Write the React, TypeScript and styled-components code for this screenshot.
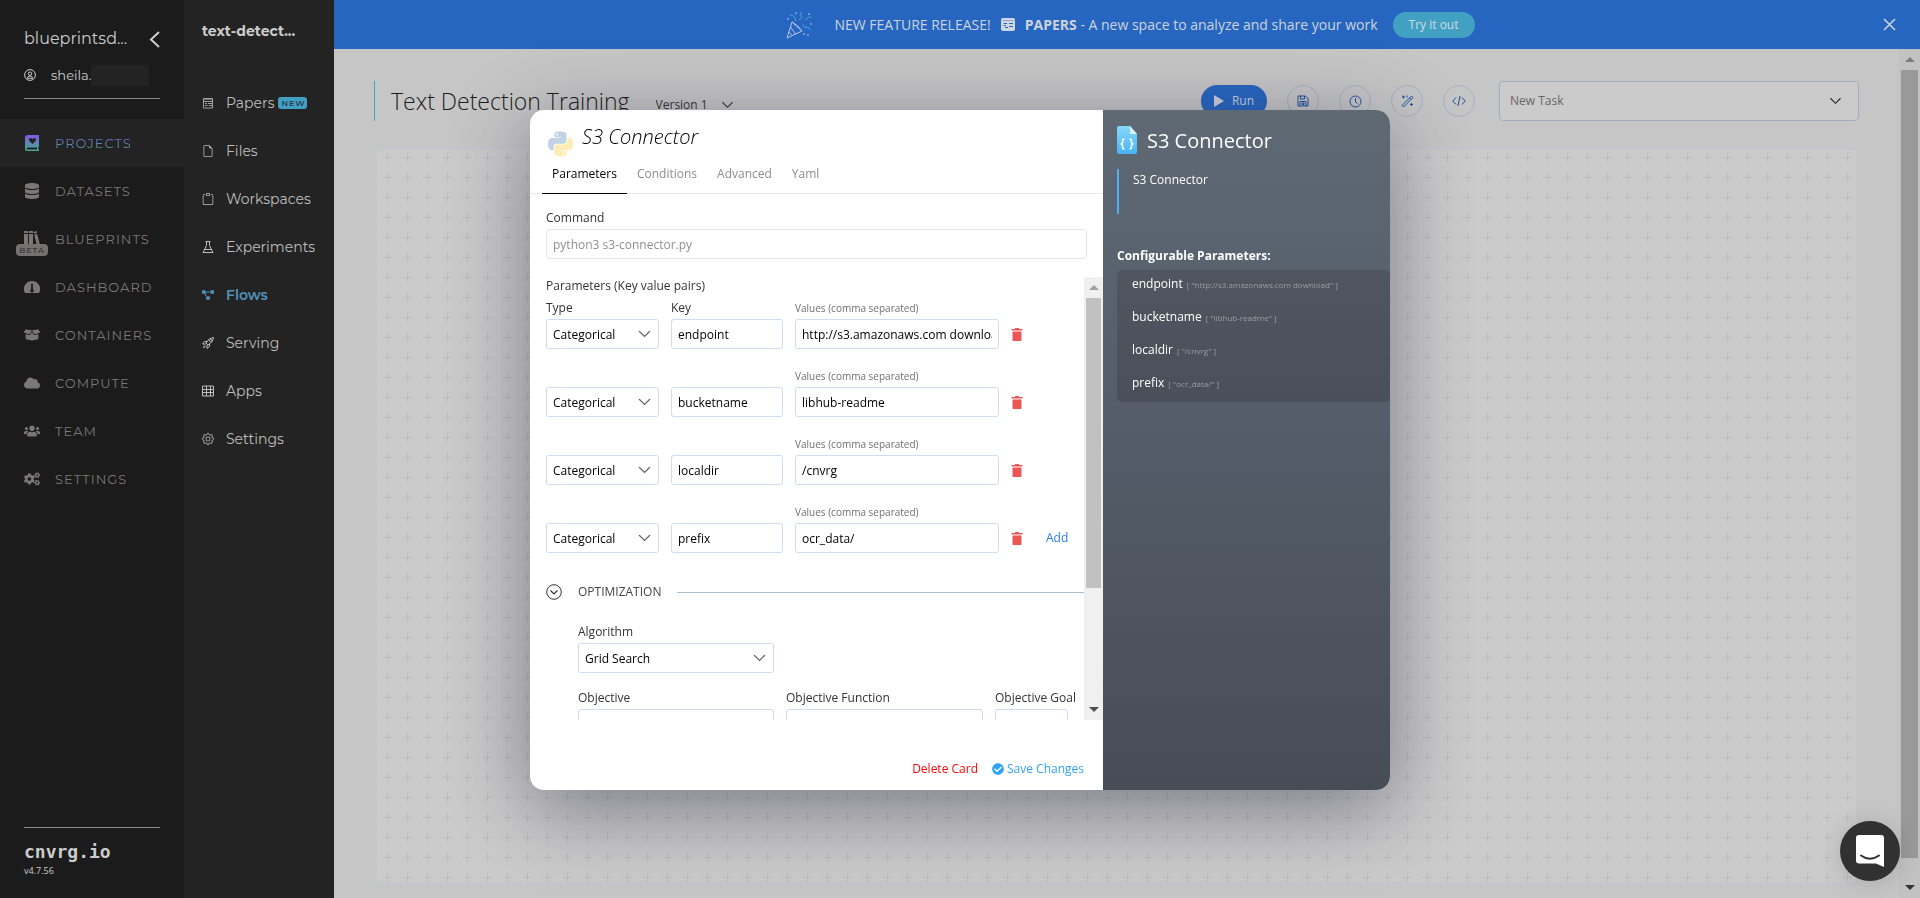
import React, { useId, useState } from 'react';
import styled, { createGlobalStyle, css } from 'styled-components';
import { FaDatabase, FaBoxOpen, FaCloud, FaUsers, FaCogs, FaProjectDiagram, FaCheckCircle } from 'react-icons/fa';
import { BsFileEarmark, BsClipboard, BsGear } from 'react-icons/bs';

const text = "'Open Sans', 'Noto Sans', sans-serif";
const nav = "Montserrat, Inter, sans-serif";

const Global = createGlobalStyle`
  *, *::before, *::after { box-sizing: border-box; }
  body { margin: 0; overflow: hidden; background: #c6c6c6; font: 12px/18px ${text}; color: #333; }
  button, input, select { font: inherit; color: inherit; margin: 0; }
  button { padding: 0; border: 0; background: none; cursor: pointer; }
  a { color: inherit; text-decoration: none; }
  svg { display: block; flex: none; }
`;

/* ---------- shell ---------- */
const Shell = styled.div`
  display: grid;
  grid-template-columns: 184px 150px minmax(0, 1fr);
  height: 100vh;
`;

const Sidebar = styled.aside`
  display: flex;
  flex-direction: column;
  background: #1b1b1b;
  font-family: ${nav};
  color: #cccccc;
`;

const Account = styled.header`
  margin: 0 24px 20px;
  padding-top: 27px;
  border-bottom: 1px solid #868986;
`;

const OrgRow = styled.div`
  display: flex;
  align-items: center;
  justify-content: space-between;
  height: 24px;
  font-size: 16px;
`;

const UserRow = styled.div`
  display: flex;
  align-items: center;
  margin: 13px 0 12px;
  height: 22px;
  font-size: 13px;
  span { margin-left: 15px; }
`;

const Redacted = styled.i`
  flex: 1;
  height: 21px;
  margin-right: 11px;
  background: #232323;
`;

const NavItem = styled.a<{ $active?: boolean }>`
  position: relative;
  display: flex;
  align-items: center;
  gap: 15px;
  height: 48px;
  padding-left: 24px;
  font-size: 13px;
  letter-spacing: 1px;
  color: #7b7777;
  background: ${p => (p.$active ? '#232323' : 'transparent')};
  span {
    ${p => p.$active && css`
      color: transparent;
      background: linear-gradient(#7a5fd6, #4aa392);
      background-clip: text;
      -webkit-background-clip: text;
    `}
  }
`;

const Beta = styled.b`
  position: absolute;
  left: 16px;
  top: 29px;
  width: 32px;
  height: 12px;
  border-radius: 4px;
  background: #757171;
  color: #333;
  font: 500 8px/12px ${nav};
  letter-spacing: 1px;
  text-align: center;
`;

const Brand = styled.footer`
  margin: auto 24px 20px;
  padding-top: 12px;
  border-top: 1px solid #868986;
  strong { display: block; font: bold 18px/24px 'DejaVu Sans Mono', monospace; }
  small { display: block; font: 9px/14px ${text}; }
`;

const SubNav = styled.nav`
  background: #232323;
  font-family: ${nav};
  color: #bdbdbd;
  h2 { margin: 21px 18px 43px; font-size: 14px; line-height: 20px; color: #cccccc; }
`;

const SubItem = styled.a<{ $active?: boolean }>`
  display: flex;
  align-items: center;
  gap: 12px;
  height: 48px;
  padding: 0 0 10px 18px;
  font-size: 14px;
  ${p => p.$active && 'color: #5292b8; font-weight: 600;'}
`;

const NewTag = styled.b`
  margin-left: -8px;
  padding: 0 2px 0 3px;
  border-radius: 3px;
  background: #429fc2;
  color: #23404c;
  font: 600 8px/12px ${nav};
  letter-spacing: 1px;
`;

const Main = styled.main`
  display: grid;
  grid-template-rows: 49px minmax(0, 1fr);
`;

/* ---------- banner ---------- */
const Banner = styled.div`
  display: flex;
  align-items: center;
  background: #2666c0;
  color: #cdd3dc;
  font-size: 14px;
  padding: 0 24px;
`;

const BannerCopy = styled.div`
  flex: 1;
  display: flex;
  align-items: center;
  justify-content: center;
  padding-left: 20px;
  gap: 10px;
  p { margin: 0; }
  > svg:first-child { margin-right: 11px; }
`;

const TryButton = styled.button`
  margin-left: 5px;
  width: 82px;
  height: 26px;
  border-radius: 13px;
  background: #42a1c2;
  font-size: 12px;
  color: #d0dde2;
`;

/* ---------- workspace ---------- */
const Workspace = styled.div`
  display: flex;
  min-height: 0;
`;

const Content = styled.section`
  flex: 1;
  display: flex;
  flex-direction: column;
  padding: 32px 40px 13px;
`;

const Toolbar = styled.header`
  display: flex;
  align-items: center;
  height: 40px;
  margin-bottom: 26px;
`;

const Title = styled.h1`
  margin: 0;
  padding-left: 16px;
  border-left: 1px solid #3fa7c6;
  font-size: 23px;
  line-height: 40px;
  font-weight: 300;
  color: #1c1c1c;
`;

const Actions = styled.div`
  display: flex;
  align-items: center;
  gap: 20px;
  margin-left: auto;
`;

const RunButton = styled.button`
  display: flex;
  align-items: center;
  justify-content: center;
  gap: 8px;
  width: 66px;
  height: 32px;
  border-radius: 16px;
  background: #2666c0;
  color: #ccd2dc;
  font-size: 12px;
`;

const RoundButton = styled.button`
  display: grid;
  place-items: center;
  width: 32px;
  height: 32px;
  border: 1px solid #a3b1c9;
  border-radius: 50%;
  color: #1d4f9c;
`;

const PickerBox = styled.div<{ $variant: 'plain' | 'task' | 'field' }>`
  position: relative;
  select {
    width: 100%;
    appearance: none;
    outline: 0;
    border: 1px solid;
  }
  > svg { position: absolute; pointer-events: none; top: 50%; transform: translateY(-50%); }
  ${p => p.$variant === 'plain' && css`
    margin: 8px 0 0 26px;
    width: 80px;
    color: #333;
    select { border: 0; background: none; padding: 0; height: 18px; }
    > svg { right: 3px; }
  `}
  ${p => p.$variant === 'task' && css`
    margin-left: 4px;
    width: 360px;
    color: #666;
    select { height: 40px; border-color: #a0acc4; border-radius: 4px; background: #cbcbcb; padding: 0 10px; }
    > svg { right: 18px; color: #222; }
  `}
  ${p => p.$variant === 'field' && css`
    color: #000;
    select { height: 30px; border-color: #cfddf3; border-radius: 3px; background: #fff; padding: 1px 6px 0; }
    > svg { right: 8px; color: #666; }
  `}
`;

const Canvas = styled.div`
  flex: 1;
  border: 3px solid #c3c7cd;
  border-radius: 6px;
  background: #cbcbcb 0 -3px
    url("data:image/svg+xml,%3Csvg xmlns='http://www.w3.org/2000/svg' width='20' height='20'%3E%3Cpath d='M6 10.500h9M10.500 6v9' stroke='%23bcbcbc'/%3E%3C/svg%3E");
`;

/* ---------- scrollbars ---------- */
const Track = styled.div<{ $w: number; $dim?: boolean }>`
  flex: none;
  display: flex;
  flex-direction: column;
  align-items: center;
  width: ${p => p.$w}px;
  background: ${p => (p.$dim ? '#c2c2c2' : '#f0f0f0')};
  > svg { margin: 8px 0; }
`;

const Thumb = styled.div<{ $share: number; $dim?: boolean }>`
  flex: ${p => p.$share};
  width: calc(100% - 4px);
  background: ${p => (p.$dim ? '#999' : '#c1c1c1')};
`;

const TrackRest = styled.div<{ $share: number }>`
  flex: ${p => p.$share};
`;

/* ---------- dialog ---------- */
const Overlay = styled.div`
  position: fixed;
  inset: 0;
  display: grid;
  place-items: center;
  padding-top: 2px;
`;

const Dialog = styled.section`
  display: grid;
  grid-template-columns: 573px 287px;
  height: 680px;
  border-radius: 14px;
  overflow: hidden;
  background: #fff;
  box-shadow: 0 18px 80px rgba(32, 32, 58, 0.48);
`;

const Editor = styled.form`
  display: flex;
  flex-direction: column;
  min-height: 0;
`;

const EditorHead = styled.header`
  display: flex;
  align-items: flex-start;
  gap: 9px;
  padding: 15px 18px 0;
  svg { margin-top: 6px; }
  h2 { margin: 0; font-size: 20px; line-height: 24px; font-weight: 300; font-style: italic; color: #000; }
`;

const Tabs = styled.div`
  display: flex;
  padding-left: 12px;
  box-shadow: inset 0 -1px #e9e9e9;
`;

const Tab = styled.button<{ $active: boolean }>`
  padding: 8px 10px 10px;
  border-bottom: 1px solid ${p => (p.$active ? '#000' : 'transparent')};
  color: ${p => (p.$active ? '#000' : '#8c8c8c')};
`;

const Field = styled.div`
  display: flex;
  flex-direction: column;
  justify-content: flex-end;
  gap: 2px;
  min-width: 0;
  label { white-space: nowrap; }
`;

const SmallLabel = styled.label`
  font-size: 10px;
  color: #707070;
`;

const TextInput = styled.input`
  width: 100%;
  height: 30px;
  padding: 0 6px;
  border: 1px solid #cfddf3;
  border-radius: 3px;
  outline: 0;
  background: #fff;
  color: #000;
  &:disabled { border-color: #e5e5e5; color: #8f8f8f; }
`;

const CommandBlock = styled.div`
  padding: 15px 16px 18px;
`;

const ScrollArea = styled.div`
  flex: 1;
  display: flex;
  min-height: 0;
  overflow: hidden;
`;

const ScrollBody = styled.div`
  flex: 1;
  min-width: 0;
  padding-left: 16px;
  overflow: hidden;
`;

const ParamList = styled.fieldset`
  display: grid;
  gap: 18px;
  margin: 0;
  padding: 0;
  border: 0;
  legend { padding: 0; margin-bottom: 4px; }
`;

const ParamRow = styled.div`
  display: grid;
  grid-template-columns: 113px 112px 204px 12px auto;
  column-gap: 12px;
  justify-content: start;
`;

const IconButton = styled.button`
  align-self: end;
  height: 30px;
`;

const AddButton = styled.button`
  align-self: end;
  height: 30px;
  margin-left: 11px;
  color: #2a80ee;
`;

const SectionToggle = styled.button`
  display: flex;
  align-items: center;
  gap: 16px;
  width: 100%;
  height: 18px;
  margin-top: 30px;
  color: #444;
  &::after { content: ''; flex: 1; height: 1px; background: #aebfd2; }
`;

const OptimGrid = styled.div`
  display: grid;
  grid-template-columns: 196px 197px 73px;
  gap: 16px 12px;
  padding: 22px 0 0 32px;
`;

const FirstLine = styled.div`
  grid-column: 1 / -1;
  width: 196px;
`;

const EditorFoot = styled.footer`
  display: flex;
  justify-content: flex-end;
  gap: 14px;
  height: 70px;
  padding: 40px 19px 12px 0;
`;

const FootButton = styled.button<{ $tone: string }>`
  display: flex;
  align-items: center;
  gap: 3px;
  height: 18px;
  color: ${p => p.$tone};
`;

const Info = styled.aside`
  padding: 16px 0 0 14px;
  background: linear-gradient(#5e6974, #545d69 45%, #474d57);
  color: #fff;
`;

const InfoHead = styled.header`
  display: flex;
  align-items: center;
  gap: 10px;
  height: 28px;
  h2 { margin: 0; padding-top: 2px; font-size: 20px; line-height: 28px; font-weight: 400; }
`;

const Summary = styled.p`
  margin: 15px 0 33px;
  height: 45px;
  padding: 2px 0 0 14px;
  border-left: 2px solid #4db2f5;
`;

const InfoTitle = styled.h3`
  margin: 0 0 5px;
  font-size: 12px;
  line-height: 18px;
`;

const ParamSummary = styled.ul`
  margin: 0;
  padding: 0 0 0 15px;
  list-style: none;
  border-radius: 5px;
  background: linear-gradient(#50565f, #4a5059);
  li { height: 33px; padding-top: 5px; }
  small { margin-left: 4px; font-size: 8px; color: #9a9da3; }
`;

const ChatButton = styled.button`
  position: fixed;
  right: 20px;
  bottom: 17px;
  display: grid;
  place-items: center;
  width: 60px;
  height: 60px;
  border-radius: 50%;
  background: #313131;
  box-shadow: 0 2px 24px rgba(0, 0, 0, 0.15);
`;

/* ---------- drawings ---------- */
const Chevron = ({ w = 12 }: { w?: number }) => (
  <svg width={w} height="7" viewBox="0 0 12 7" fill="none" stroke="currentColor" strokeWidth="1.200"><path d="M.5.5 6 6 11.500.5" /></svg>
);

const Arrow = ({ down, color }: { down?: boolean; color: string }) => (
  <svg width="10" height="5" viewBox="0 0 10 5" fill={color}><path d={down ? 'M0 0h10L5 5z' : 'M0 5h10L5 0z'} /></svg>
);

const Trash = () => (
  <svg width="12" height="13" viewBox="0 0 12 13" fill="#ec5555"><path d="M4 0h4v1h3.500v1.500H.5V1H4zM1.500 3.500h9V12q0 1-1 1h-7q-1 0-1-1z" /></svg>
);

const UserIcon = () => (
  <svg width="12" height="12" viewBox="0 0 12 12" fill="none" stroke="currentColor"><circle cx="6" cy="6" r="5.400" /><circle cx="6" cy="4.700" r="1.700" /><path d="M3.300 9.300q.4-2.300 2.700-2.300t2.700 2.300z" /></svg>
);

const ProjectIcon = () => (
  <svg width="16" height="16" viewBox="0 0 16 16">
    <defs><linearGradient id="proj" x2="0" y2="1"><stop stopColor="#8157e0" /><stop offset="1" stopColor="#42b08a" /></linearGradient></defs>
    <path fill="url(#proj)" fillRule="evenodd" d="M3.500 0H15v11.500l-.6.600v2l.6.600V16H3.500Q1 16 1 13.500v-11Q1 0 3.500 0zM3.800 12.500q-1.200.1-1.200 1t1.200 1H13v-2zM8.500 9l3.200-3.300q1-1.300-.1-2.300-1.300-1-2.500.1l-.6.600-.6-.6q-1.200-1.100-2.500-.1-1.100 1-.1 2.300z" />
  </svg>
);

const BooksIcon = () => (
  <svg width="16" height="16" viewBox="0 0 16 16" fill="currentColor"><path d="M0 0h4v2H0zM0 3h4v13H0zM5 0h4v2H5zM5 3h4v13H5zM9.500 1l3-.9.5 1.900-3 .8zM10.200 3.800l3-.8L16 14l-3 .9z" /></svg>
);

const GaugeIcon = () => (
  <svg width="16" height="16" viewBox="0 0 16 16" fill="currentColor"><path fillRule="evenodd" d="M8 2a8 8 0 0 0-7 12h14A8 8 0 0 0 8 2zm-.7 2.500h1.400l.3 6a1.700 1.700 0 1 1-2 0z" /></svg>
);

const PaperIcon = () => (
  <svg width="12" height="12" viewBox="0 0 12 12" fill="none" stroke="currentColor"><path opacity=".8" d="M1.500 1.500h9v9.500h-9z" /><path opacity=".5" d="M1 2.500h10" /><path opacity=".8" d="M1 4.500h10M3 6.500h2M6 6.500h4M3 8.500h2.500M7 8.500h3" /></svg>
);

const BannerPaper = () => (
  <svg width="14" height="13" viewBox="0 0 14 13"><rect width="14" height="13" rx="2" fill="#d0d7e2" /><path d="M2.500 5.500H6M8 5.500h4M2.500 7.500H5M8 8.500h4M4 9.500h3" stroke="#2666c0" /><path d="M1.500 2.500h11" stroke="#8aa9d8" /></svg>
);

const FlaskIcon = () => (
  <svg width="12" height="12" viewBox="0 0 12 12" fill="none" stroke="currentColor"><path d="M3.500.5h5M4.500.5v4L1 11.500h10L7.500 4.500v-4M3 8.500h6" /></svg>
);

const RocketIcon = () => (
  <svg width="12" height="12" viewBox="0 0 12 12" fill="none" stroke="currentColor"><path d="M11.500.5Q7 .5 4 6l2 2q5.500-3 5.500-7.500zM5 4.500H2.500L.5 7H4M7.500 7v2.500l-2.500 2V8M2.500 8.500l-1 2 2-1" /><circle cx="8.500" cy="3.500" r="1" /></svg>
);

const GridIcon = () => (
  <svg width="12" height="12" viewBox="0 0 12 12" fill="none" stroke="currentColor"><path d="M.5 1v10h11V1zM.5 4.500h11M.5 7.500h11M4.500 1v10M8.500 1v10" /></svg>
);

const Confetti = () => (
  <svg width="27" height="28" viewBox="0 0 27 28" fill="none" stroke="#b5c8e6">
    <path d="M6 11 1 27l15-7zM6 11q6 3 10 9M4.500 16l5 7M3 21l3 3.500" />
    <path stroke="#45a6cf" d="M4 4q5 0 6 6M13 9q4-2 2-4t1-4M17 13q0 4 3 3t4 3M20 9q0-3 5-3" />
    <path d="M10 1v2M23 2v2M25 12v2M22 23v2M2 7v2M18 22v2" />
  </svg>
);

const SaveIcon = () => (
  <svg width="12" height="12" viewBox="0 0 12 12" fill="none" stroke="currentColor"><path d="M1 1h7.500L11 3.500V11H1zM3.500 1v3h4V1M3 11V6.500h6V11M5 8h2v1.500H5z" /></svg>
);

const ClockIcon = () => (
  <svg width="13" height="13" viewBox="0 0 13 13" fill="none" stroke="currentColor"><circle cx="6.500" cy="6.500" r="5.500" /><path d="M6.500 3v4l2 1.500" /></svg>
);

const WandIcon = () => (
  <svg width="13" height="13" viewBox="0 0 13 13" fill="none" stroke="currentColor"><path d="M1 10.500 10.500 1 12 2.500 2.500 12zM8.500 3 10 4.500M2.500.5v3M1 2h3M6 .5v2M10.500 8v3M9 9.500h3" /></svg>
);

const CodeIcon = () => (
  <svg width="14" height="12" viewBox="0 0 14 12" fill="none" stroke="currentColor"><path d="M4 2.500.8 6 4 9.500M10 2.500 13.200 6 10 9.500M8 1 6 11" /></svg>
);

const PythonIcon = () => (
  <svg width="25" height="26" viewBox="0 0 24 24">
    <path fill="#c1d4e5" d="M14.250.18l.9.2.73.26.59.3.45.32.34.34.25.34.16.33.1.3.04.26.02.2-.01.13V8.500l-.05.63-.13.55-.21.46-.26.38-.3.31-.33.25-.35.19-.35.14-.33.1-.3.07-.26.04-.21.02H8.770l-.69.05-.59.14-.5.22-.41.27-.33.32-.27.35-.2.36-.15.37-.1.35-.07.32-.04.27-.02.21v3.060H3.170l-.21-.03-.28-.07-.32-.12-.35-.18-.36-.26-.36-.36-.35-.46-.32-.59-.28-.73-.21-.88-.14-1.050-.05-1.230.06-1.220.16-1.040.24-.87.32-.71.36-.57.4-.44.42-.33.42-.24.4-.16.36-.1.32-.05.24-.01h.16l.06.01h8.160v-.83H6.180l-.01-2.750-.02-.37.05-.34.11-.31.17-.28.25-.26.31-.23.38-.2.44-.18.51-.15.58-.12.64-.1.71-.06.77-.04.84-.02 1.270.05z" />
    <path fill="#ffedb5" d="M21.040 6.110l.28.06.32.12.35.18.36.27.36.35.35.47.32.59.28.73.21.88.14 1.040.05 1.230-.06 1.230-.16 1.040-.24.86-.32.71-.36.57-.4.45-.42.33-.42.24-.4.16-.36.09-.32.05-.24.02-.16-.01h-8.220v.82h5.840l.01 2.760.02.36-.05.34-.11.31-.17.29-.25.25-.31.24-.38.2-.44.17-.51.15-.58.13-.64.09-.71.07-.77.04-.84.01-1.270-.04-1.070-.14-.9-.2-.73-.25-.59-.3-.45-.33-.34-.34-.25-.34-.16-.33-.1-.3-.04-.25-.02-.2.01-.13v-5.340l.05-.64.13-.54.21-.46.26-.38.3-.32.33-.24.35-.2.35-.14.33-.1.3-.06.26-.04.21-.02.13-.01h5.840l.69-.05.59-.14.5-.21.41-.28.33-.32.27-.35.2-.36.15-.36.1-.35.07-.32.04-.28.02-.21V6.070h2.090z" />
    <circle cx="8.700" cy="2.900" r="1" fill="#fff" /><circle cx="15.300" cy="21.100" r="1" fill="#fff" />
  </svg>
);

const JsonFileIcon = () => (
  <svg width="20" height="28" viewBox="0 0 20 28">
    <defs><linearGradient id="file" x2="0" y2="1"><stop stopColor="#86d9f8" /><stop offset="1" stopColor="#48b4f4" /></linearGradient></defs>
    <path fill="url(#file)" d="M2 0h11l7 8v18q0 2-2 2H2q-2 0-2-2V2Q0 0 2 0z" /><path fill="#d7f2fd" d="M13 0l7 8h-7z" />
    <path fill="none" stroke="#fff" strokeWidth="1.500" d="M7.500 13q-2 0-2 2v1.500q0 1.500-2 1.500 2 0 2 1.500V21q0 2 2 2M12.500 13q2 0 2 2v1.500q0 1.500 2 1.500-2 0-2 1.500V21q0 2-2 2" />
  </svg>
);

const CircleChevron = () => (
  <svg width="16" height="16" viewBox="0 0 16 16" fill="none" stroke="#333"><circle cx="8" cy="8" r="7.300" /><path d="M4.500 6.500 8 10l3.500-3.500" strokeWidth="1.200" /></svg>
);

const ChatIcon = () => (
  <svg width="28" height="32" viewBox="0 0 28 32"><path fill="#fff" d="M3 0h22q3 0 3 3v29l-8-3.500H3q-3 0-3-3V3Q0 0 3 0z" /><path fill="none" stroke="#313131" strokeWidth="2" strokeLinecap="round" d="M5 20.500q9 6.500 18 0" /></svg>
);

/* ---------- parts ---------- */
function Picker({ variant, options, label, id }: { variant: 'plain' | 'task' | 'field'; options: string[]; label?: string; id?: string }) {
  return (
    <PickerBox $variant={variant}>
      <select id={id} aria-label={label}>{options.map(o => <option key={o}>{o}</option>)}</select>
      <Chevron w={variant === 'field' ? 13 : 11} />
    </PickerBox>
  );
}

function PickField({ label, options }: { label: string; options: string[] }) {
  const id = useId();
  return <Field><label htmlFor={id}>{label}</label><Picker variant="field" id={id} options={options} /></Field>;
}

function ParamLine({ name, value, first, last }: { name: string; value: string; first: boolean; last: boolean }) {
  const id = useId();
  return (
    <ParamRow>
      <Field>
        {first && <label htmlFor={id + 't'}>Type</label>}
        <Picker variant="field" id={id + 't'} label={first ? undefined : 'Type'} options={['Categorical', 'Discrete', 'Float']} />
      </Field>
      <Field>
        {first && <label htmlFor={id + 'k'}>Key</label>}
        <TextInput id={id + 'k'} aria-label={first ? undefined : 'Key'} defaultValue={name} />
      </Field>
      <Field>
        <SmallLabel htmlFor={id + 'v'}>Values (comma separated)</SmallLabel>
        <TextInput id={id + 'v'} defaultValue={value} />
      </Field>
      <IconButton type="button" aria-label={`Remove ${name}`}><Trash /></IconButton>
      {last && <AddButton type="button">Add</AddButton>}
    </ParamRow>
  );
}

const sections = [
  { name: 'PROJECTS', icon: <ProjectIcon />, active: true },
  { name: 'DATASETS', icon: <FaDatabase size={16} /> },
  { name: 'BLUEPRINTS', icon: <BooksIcon />, beta: true },
  { name: 'DASHBOARD', icon: <GaugeIcon /> },
  { name: 'CONTAINERS', icon: <FaBoxOpen size={16} /> },
  { name: 'COMPUTE', icon: <FaCloud size={16} /> },
  { name: 'TEAM', icon: <FaUsers size={16} /> },
  { name: 'SETTINGS', icon: <FaCogs size={16} /> },
];

const pages = [
  { name: 'Papers', icon: <PaperIcon />, fresh: true },
  { name: 'Files', icon: <BsFileEarmark size={12} /> },
  { name: 'Workspaces', icon: <BsClipboard size={12} /> },
  { name: 'Experiments', icon: <FlaskIcon /> },
  { name: 'Flows', icon: <FaProjectDiagram size={12} />, active: true },
  { name: 'Serving', icon: <RocketIcon /> },
  { name: 'Apps', icon: <GridIcon /> },
  { name: 'Settings', icon: <BsGear size={12} /> },
];

const params = [
  { name: 'endpoint', value: 'http://s3.amazonaws.com download' },
  { name: 'bucketname', value: 'libhub-readme' },
  { name: 'localdir', value: '/cnvrg' },
  { name: 'prefix', value: 'ocr_data/' },
];

const tabNames = ['Parameters', 'Conditions', 'Advanced', 'Yaml'];

export default function App() {
  const [tab, setTab] = useState('Parameters');
  return (
    <>
      <Global />
      <Shell>
        <Sidebar>
          <Account>
            <OrgRow>
              blueprintsd...
              <button aria-label="Collapse menu">
                <svg width="11" height="17" viewBox="0 0 11 17" fill="none" stroke="#ccc" strokeWidth="2"><path d="M10 1 2 8.500l8 7.500" /></svg>
              </button>
            </OrgRow>
            <UserRow><UserIcon /><span>sheila.</span><Redacted /></UserRow>
          </Account>
          <nav>
            {sections.map(s => (
              <NavItem key={s.name} href="#" $active={s.active}>
                {s.icon}<span>{s.name}</span>{s.beta && <Beta>BETA</Beta>}
              </NavItem>
            ))}
          </nav>
          <Brand><strong>cnvrg.io</strong><small>v4.7.56</small></Brand>
        </Sidebar>

        <SubNav>
          <h2>text-detect...</h2>
          {pages.map(p => (
            <SubItem key={p.name} href="#" $active={p.active}>
              {p.icon}<span>{p.name}</span>{p.fresh && <NewTag>NEW</NewTag>}
            </SubItem>
          ))}
        </SubNav>

        <Main>
          <Banner>
            <BannerCopy>
              <Confetti />
              <p>NEW FEATURE RELEASE!</p>
              <BannerPaper />
              <p><b>PAPERS</b> - A new space to analyze and share your work</p>
              <TryButton>Try it out</TryButton>
            </BannerCopy>
            <button aria-label="Dismiss">
              <svg width="13" height="13" viewBox="0 0 13 13" stroke="#d0d7e2" strokeWidth="1.500"><path d="M1 1l11 11M12 1 1 12" /></svg>
            </button>
          </Banner>
          <Workspace>
            <Content>
              <Toolbar>
                <Title>Text Detection Training</Title>
                <Picker variant="plain" label="Version" options={['Version 1']} />
                <Actions>
                  <RunButton><svg width="10" height="12" viewBox="0 0 10 12" fill="currentColor"><path d="M0 0l10 6-10 6z" /></svg>Run</RunButton>
                  <RoundButton aria-label="Save"><SaveIcon /></RoundButton>
                  <RoundButton aria-label="Schedule"><ClockIcon /></RoundButton>
                  <RoundButton aria-label="Arrange"><WandIcon /></RoundButton>
                  <RoundButton aria-label="Code"><CodeIcon /></RoundButton>
                  <Picker variant="task" label="New task" options={['New Task']} />
                </Actions>
              </Toolbar>
              <Canvas />
            </Content>
            <Track $w={21} $dim>
              <Arrow color="#7c7c7c" />
              <Thumb $share={788} $dim />
              <TrackRest $share={19} />
              <Arrow down color="#333" />
            </Track>
          </Workspace>
        </Main>
      </Shell>

      <Overlay>
        <Dialog role="dialog" aria-label="S3 Connector">
          <Editor onSubmit={e => e.preventDefault()}>
            <EditorHead><PythonIcon /><h2>S3 Connector</h2></EditorHead>
            <Tabs role="tablist">
              {tabNames.map(t => (
                <Tab key={t} type="button" role="tab" aria-selected={t === tab} $active={t === tab} onClick={() => setTab(t)}>{t}</Tab>
              ))}
            </Tabs>
            <CommandBlock>
              <Field>
                <label htmlFor="command">Command</label>
                <TextInput id="command" disabled defaultValue="python3 s3-connector.py" />
              </Field>
            </CommandBlock>
            <ScrollArea>
              <ScrollBody>
                <ParamList>
                  <legend>Parameters (Key value pairs)</legend>
                  {params.map((p, i) => (
                    <ParamLine key={p.name} {...p} first={i === 0} last={i === params.length - 1} />
                  ))}
                </ParamList>
                <SectionToggle type="button"><CircleChevron />OPTIMIZATION</SectionToggle>
                <OptimGrid>
                  <FirstLine><PickField label="Algorithm" options={['Grid Search', 'Random Search']} /></FirstLine>
                  <Field><label htmlFor="objective">Objective</label><TextInput id="objective" /></Field>
                  <Field><label htmlFor="function">Objective Function</label><TextInput id="function" /></Field>
                  <Field><label htmlFor="goal">Objective Goal</label><TextInput id="goal" /></Field>
                </OptimGrid>
              </ScrollBody>
              <Track $w={19}>
                <Arrow color="#a0a0a0" />
                <Thumb $share={290} />
                <TrackRest $share={111} />
                <Arrow down color="#505050" />
              </Track>
            </ScrollArea>
            <EditorFoot>
              <FootButton type="button" $tone="#f80606">Delete Card</FootButton>
              <FootButton $tone="#2fa4f6"><FaCheckCircle size={12} />Save Changes</FootButton>
            </EditorFoot>
          </Editor>

          <Info>
            <InfoHead><JsonFileIcon /><h2>S3 Connector</h2></InfoHead>
            <Summary>S3 Connector</Summary>
            <InfoTitle>Configurable Parameters:</InfoTitle>
            <ParamSummary>
              {params.map(p => <li key={p.name}>{p.name}<small>[ "{p.value}" ]</small></li>)}
            </ParamSummary>
          </Info>
        </Dialog>
      </Overlay>

      <ChatButton aria-label="Open chat"><ChatIcon /></ChatButton>
    </>
  );
}
